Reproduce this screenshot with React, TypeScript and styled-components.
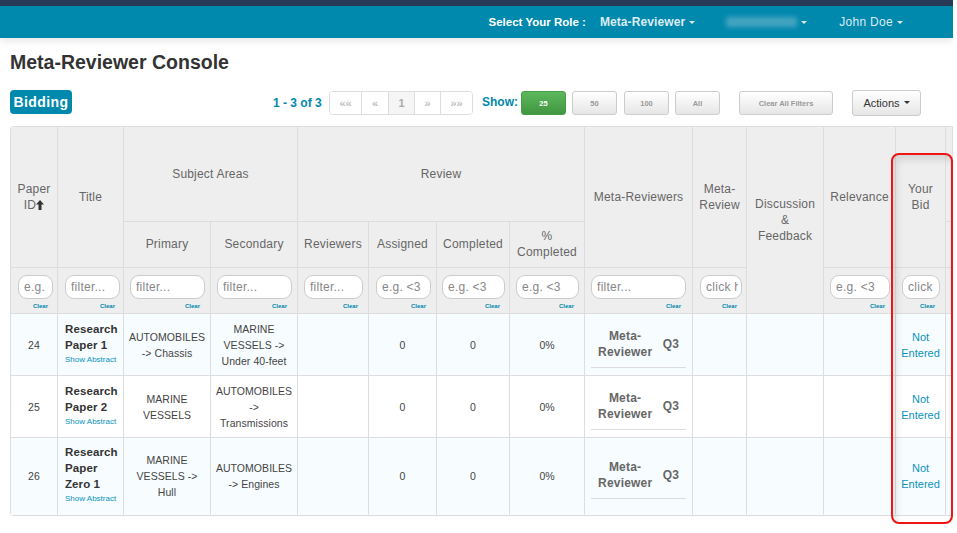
import React from "react";
import styled, { createGlobalStyle } from "styled-components";

const Global = createGlobalStyle`
  html, body { margin: 0; padding: 0; background: #fff; }
  body { font-family: "Liberation Sans", Arial, sans-serif; font-size: 12px; color: #333; overflow: hidden; }
  * { box-sizing: border-box; }
`;

const Page = styled.div`
  position: relative;
  width: 957px;
  height: 533px;
  overflow: hidden;
`;
const Main = styled.div`
  width: 953px;
  overflow: hidden;
`;
const NavBar = styled.header`
  height: 38px;
  border-top: 6px solid #293a58;
  background: #0088ad;
  display: flex;
  align-items: center;
  justify-content: flex-end;
  padding-right: 50px;
  box-shadow: 0 3px 8px rgba(0, 0, 0, 0.1);
`;
const RoleLabel = styled.span`
  color: #fff;
  font-size: 11.5px;
  font-weight: bold;
  margin-right: 14px;
`;
const NavItem = styled.span<{ $bold?: boolean; $gap: number }>`
  color: #dcecf2;
  font-weight: ${(p) => (p.$bold ? "bold" : "normal")};
  letter-spacing: ${(p) => (p.$bold ? 0.1 : 0.3)}px;
  margin-right: ${(p) => p.$gap}px;
  display: inline-flex;
  align-items: center;
`;
const Caret = styled.i<{ $color?: string }>`
  display: inline-block;
  margin-left: 4px;
  border-left: 3px solid transparent;
  border-right: 3px solid transparent;
  border-top: 3px solid ${(p) => p.$color ?? "#dcecf2"};
`;
const Blurred = styled.span`
  display: inline-block;
  width: 71px;
  height: 10px;
  background: #45a5c2;
  filter: blur(2.5px);
`;
const Heading = styled.h1`
  margin: 0;
  padding: 14px 0 0 10px;
  font-size: 19.5px;
  line-height: 20px;
  font-weight: bold;
  color: #333;
`;
const Toolbar = styled.div`
  display: flex;
  align-items: center;
  height: 26px;
  margin: 18px 0 10px;
  padding-left: 10px;
`;
const Badge = styled.span`
  align-self: flex-start;
  width: 62px;
  height: 24px;
  border-radius: 4px;
  background: #0088ad;
  color: #fff;
  font-weight: bold;
  font-size: 14px;
  letter-spacing: 0.4px;
  display: flex;
  align-items: center;
  justify-content: center;
`;
const Count = styled.span`
  margin-left: 201px;
  width: 56px;
  padding-bottom: 1px;
  color: #0088ad;
  font-weight: bold;
  font-size: 12px;
`;
const Pager = styled.div`
  display: flex;
  height: 24px;
  border: 1px solid #ddd;
  border-radius: 4px;
  overflow: hidden;
`;
const PageCell = styled.span<{ $w: number; $active?: boolean }>`
  width: ${(p) => p.$w}px;
  display: flex;
  align-items: center;
  justify-content: center;
  font-size: 11px;
  color: #aaa;
  font-weight: ${(p) => (p.$active ? "bold" : "normal")};
  background: ${(p) => (p.$active ? "#f5f5f5" : "#fff")};
  border-left: 1px solid #ddd;
  &:first-child { border-left: 0; }
`;
const ShowLabel = styled.span`
  margin-left: 9px;
  width: 39px;
  padding-bottom: 2px;
  color: #0088ad;
  font-weight: bold;
`;
const SizeButton = styled.span<{ $w: number; $gap: number; $on?: boolean }>`
  width: ${(p) => p.$w}px;
  height: 24px;
  margin-right: ${(p) => p.$gap}px;
  border-radius: 3px;
  border: 1px solid ${(p) => (p.$on ? "#449d44" : "#ccc")};
  background: ${(p) => (p.$on ? "linear-gradient(#5cb85c, #419641)" : "linear-gradient(#fff, #e6e6e6)")};
  color: ${(p) => (p.$on ? "#fff" : "#999")};
  font-size: 7.5px;
  font-weight: bold;
  display: flex;
  align-items: center;
  justify-content: center;
`;
const ActionsButton = styled.span`
  width: 69px;
  height: 26px;
  padding-bottom: 1px;
  border-radius: 3px;
  border: 1px solid #ccc;
  background: linear-gradient(#fff, #e6e6e6);
  color: #333;
  font-size: 11px;
  display: flex;
  align-items: center;
  justify-content: center;
`;
const TableFrame = styled.div`
  margin-left: 10px;
  width: 943px;
  height: 390px;
  overflow: hidden;
`;
const Table = styled.table`
  table-layout: fixed;
  border-collapse: separate;
  border-spacing: 0;
  width: 943px;
  border-top: 1px solid #ddd;
  border-left: 1px solid #ddd;
  border-bottom: 1px solid #ddd;
  border-radius: 4px 0 0 4px;
  color: #555;
`;
const Th = styled.th<{ $lift?: number }>`
  background: #eee;
  font-weight: normal;
  color: #666;
  font-size: 12px;
  line-height: 16px;
  letter-spacing: 0.2px;
  padding: 0 2px ${(p) => p.$lift ?? 0}px;
  text-align: center;
  vertical-align: middle;
  border-right: 1px solid #ddd;
  border-bottom: 1px solid #ddd;
`;
const FilterCell = styled.th<{ $l?: number; $r?: number }>`
  background: #eee;
  height: 46px;
  padding: 7px ${(p) => p.$r ?? 5}px 0 ${(p) => p.$l ?? 6}px;
  vertical-align: top;
  border-right: 1px solid #ddd;
  border-bottom: 1px solid #ddd;
  font-weight: normal;
`;
const FilterInput = styled.input`
  display: block;
  width: 100%;
  height: 24px;
  border: 1px solid #ccc;
  border-radius: 9px;
  background: #fff;
  padding: 0 3px 0 5px;
  font: 12px "Liberation Sans", Arial, sans-serif;
  letter-spacing: 0.25px;
  outline: none;
  &::placeholder { color: #888; opacity: 1; }
`;
const ClearLink = styled.a`
  display: block;
  margin-top: 3px;
  font-size: 6px;
  line-height: 8px;
  font-weight: bold;
  color: #0088ad;
  text-align: right;
  padding-right: 5px;
`;
const Row = styled.tr<{ $tint?: boolean; $h: number }>`
  height: ${(p) => p.$h}px;
  background: ${(p) => (p.$tint ? "#f7fcff" : "#fff")};
`;
const Td = styled.td`
  font-size: 10.5px;
  line-height: 16px;
  letter-spacing: 0.05px;
  text-align: center;
  vertical-align: middle;
  padding: 0 4px;
  color: #444;
  border-right: 1px solid #ddd;
  border-bottom: 1px solid #ddd;
  tr:last-child > & { border-bottom-color: transparent; }
`;
const TitleTd = styled(Td)`
  text-align: left;
  padding: 0 4px 2px 7px;
`;
const PaperName = styled.div`
  font-size: 11.5px;
  font-weight: bold;
  color: #333;
  letter-spacing: 0.1px;
`;
const AbstractLink = styled.a`
  display: block;
  white-space: nowrap;
  font-size: 8px;
  line-height: 14px;
  letter-spacing: 0;
  color: #0a93bb;
`;
const ReviewerBox = styled.div`
  display: flex;
  align-items: center;
  justify-content: space-between;
  height: 46px;
  margin: 0 2px;
  padding: 0 7px 1px;
  border-bottom: 1px solid #ddd;
  font-size: 12px;
  font-weight: bold;
  color: #666;
  letter-spacing: 0.2px;
`;
const ReviewerName = styled.span`
  width: 54px;
  text-align: center;
`;
const BidLink = styled.a`
  color: #0a93bb;
  font-size: 11px;
  letter-spacing: 0;
`;
const Callout = styled.div`
  position: absolute;
  left: 891px;
  top: 153px;
  width: 62px;
  height: 371px;
  border: 2px solid #f01414;
  border-radius: 8px;
  box-shadow: inset 4px 5px 7px rgba(0, 0, 0, 0.1);
  pointer-events: none;
`;

const widths = [47, 66, 87, 87, 71, 68, 73, 75, 108, 54, 77, 72, 50, 7];

const filters: { text: string; l?: number; r?: number }[] = [
  { text: "e.g. <3", l: 7, r: 4 },
  { text: "filter...", l: 7, r: 3 },
  { text: "filter..." },
  { text: "filter..." },
  { text: "filter..." },
  { text: "e.g. <3", l: 7, r: 5 },
  { text: "e.g. <3", l: 5, r: 4 },
  { text: "e.g. <3" },
  { text: "filter...", r: 6 },
  { text: "click here", l: 7, r: 4 },
];
const lateFilters: { text: string; l?: number; r?: number }[] = [
  { text: "e.g. <3" },
  { text: "click here" },
];

const rows = [
  { id: 24, name: "Research Paper 1", primary: "AUTOMOBILES -> Chassis", secondary: "MARINE VESSELS -> Under 40-feet", h: 62, tint: true },
  { id: 25, name: "Research Paper 2", primary: "MARINE VESSELS", secondary: "AUTOMOBILES -> Transmissions", h: 62, tint: false },
  { id: 26, name: "Research Paper Zero 1", primary: "MARINE VESSELS -> Hull", secondary: "AUTOMOBILES -> Engines", h: 77, tint: true },
];

const SortArrow = () => (
  <svg width="8" height="10" viewBox="0 0 8 10" style={{ verticalAlign: -1 }}>
    <path d="M4 0 L8 4.5 H5.5 V10 H2.5 V4.5 H0 Z" fill="#333" />
  </svg>
);

const Filter = ({ text, l, r }: { text: string; l?: number; r?: number }) => (
  <FilterCell $l={l} $r={r}>
    <FilterInput placeholder={text} readOnly />
    <ClearLink>Clear</ClearLink>
  </FilterCell>
);

export default function App() {
  return (
    <Page>
      <Global />
      <Main>
        <NavBar>
          <RoleLabel>Select Your Role :</RoleLabel>
          <NavItem $bold $gap={31}>Meta-Reviewer<Caret /></NavItem>
          <NavItem $gap={32}><Blurred /><Caret /></NavItem>
          <NavItem $gap={0}>John Doe<Caret /></NavItem>
        </NavBar>
        <Heading>Meta-Reviewer Console</Heading>
        <Toolbar>
          <Badge>Bidding</Badge>
          <Count>1 - 3 of 3</Count>
          <Pager>
            <PageCell $w={31}>««</PageCell>
            <PageCell $w={27}>«</PageCell>
            <PageCell $w={26} $active>1</PageCell>
            <PageCell $w={26}>»</PageCell>
            <PageCell $w={32}>»»</PageCell>
          </Pager>
          <ShowLabel>Show:</ShowLabel>
          <SizeButton $w={45} $gap={6} $on>25</SizeButton>
          <SizeButton $w={45} $gap={7}>50</SizeButton>
          <SizeButton $w={45} $gap={6}>100</SizeButton>
          <SizeButton $w={45} $gap={19}>All</SizeButton>
          <SizeButton $w={94} $gap={19}>Clear All Filters</SizeButton>
          <ActionsButton>Actions<Caret $color="#333" /></ActionsButton>
        </Toolbar>
        <TableFrame>
          <Table>
            <colgroup>
              {widths.map((w, i) => (
                <col key={i} style={{ width: w }} />
              ))}
            </colgroup>
            <thead>
              <tr style={{ height: 95 }}>
                <Th rowSpan={2}>Paper ID<SortArrow /></Th>
                <Th rowSpan={2}>Title</Th>
                <Th colSpan={2}>Subject Areas</Th>
                <Th colSpan={4}>Review</Th>
                <Th rowSpan={2}>Meta-Reviewers</Th>
                <Th rowSpan={2}>Meta-Review</Th>
                <Th rowSpan={3}>Discussion<br />&amp;<br />Feedback</Th>
                <Th rowSpan={2}>Relevance</Th>
                <Th rowSpan={2}>Your Bid</Th>
                <Th />
              </tr>
              <tr style={{ height: 46 }}>
                <Th $lift={2}>Primary</Th>
                <Th $lift={2}>Secondary</Th>
                <Th $lift={2}>Reviewers</Th>
                <Th $lift={2}>Assigned</Th>
                <Th $lift={2}>Completed</Th>
                <Th $lift={2}>% Completed</Th>
                <Th />
              </tr>
              <tr>
                {filters.map((f, i) => (
                  <Filter key={i} text={f.text} l={f.l} r={f.r} />
                ))}
                {lateFilters.map((f, i) => (
                  <Filter key={i} text={f.text} l={f.l} r={f.r} />
                ))}
                <FilterCell />
              </tr>
            </thead>
            <tbody>
              {rows.map((r) => (
                <Row key={r.id} $h={r.h} $tint={r.tint}>
                  <Td>{r.id}</Td>
                  <TitleTd>
                    <PaperName>{r.name}</PaperName>
                    <AbstractLink>Show Abstract</AbstractLink>
                  </TitleTd>
                  <Td>{r.primary}</Td>
                  <Td>{r.secondary}</Td>
                  <Td />
                  <Td>0</Td>
                  <Td>0</Td>
                  <Td>0%</Td>
                  <Td>
                    <ReviewerBox>
                      <ReviewerName>Meta-Reviewer</ReviewerName>
                      <span>Q3</span>
                    </ReviewerBox>
                  </Td>
                  <Td />
                  <Td />
                  <Td />
                  <Td><BidLink>Not Entered</BidLink></Td>
                  <Td />
                </Row>
              ))}
            </tbody>
          </Table>
        </TableFrame>
      </Main>
      <Callout />
    </Page>
  );
}
